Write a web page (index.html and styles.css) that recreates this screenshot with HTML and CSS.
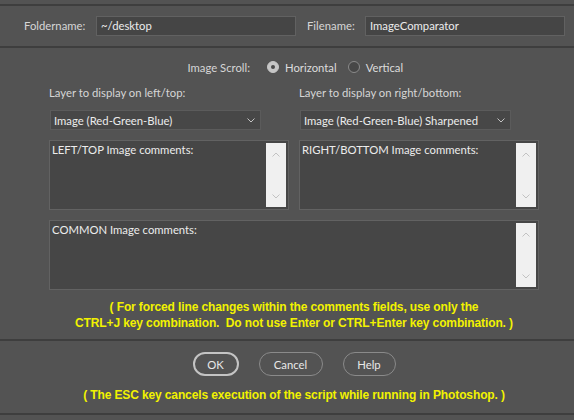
FILE: index.html
```html
<!DOCTYPE html>
<html>
<head>
<meta charset="utf-8">
<link rel="stylesheet" href="styles.css">
</head>
<body>
<div class="dialog">
  <div class="pad-top"></div>
  <div class="sep"></div>
  <div class="header">
    <span class="hlabel first">Foldername:</span>
    <div class="input">~/desktop</div>
    <span class="hlabel second">Filename:</span>
    <div class="input">ImageComparator</div>
  </div>
  <div class="sep"></div>
  <div class="main">
    <div class="scroll-row">
      <span class="scroll-label">Image Scroll:</span>
      <span class="radio checked"></span><span class="radio-text">Horizontal</span>
      <span class="radio"></span><span class="radio-text">Vertical</span>
    </div>
    <div class="cols">
      <div class="col">
        <div class="col-label">Layer to display on left/top:</div>
        <div class="select"><span>Image (Red-Green-Blue)</span><svg class="chev" width="8" height="5" viewBox="0 0 8 5"><path d="M0.5 0.5 L4 4 L7.5 0.5" fill="none" stroke="#c4c4c4" stroke-width="1"/></svg></div>
        <div class="memo"><div class="memo-text">LEFT/TOP Image comments:</div><div class="sbar"><svg width="8" height="5" viewBox="0 0 8 5"><path d="M0.5 4.5 L4 1 L7.5 4.5" fill="none" stroke="#c2c2c2" stroke-width="1"/></svg><svg width="8" height="5" viewBox="0 0 8 5"><path d="M0.5 0.5 L4 4 L7.5 0.5" fill="none" stroke="#c2c2c2" stroke-width="1"/></svg></div></div>
      </div>
      <div class="col">
        <div class="col-label">Layer to display on right/bottom:</div>
        <div class="select"><span>Image (Red-Green-Blue) Sharpened</span><svg class="chev" width="8" height="5" viewBox="0 0 8 5"><path d="M0.5 0.5 L4 4 L7.5 0.5" fill="none" stroke="#c4c4c4" stroke-width="1"/></svg></div>
        <div class="memo"><div class="memo-text">RIGHT/BOTTOM Image comments:</div><div class="sbar"><svg width="8" height="5" viewBox="0 0 8 5"><path d="M0.5 4.5 L4 1 L7.5 4.5" fill="none" stroke="#c2c2c2" stroke-width="1"/></svg><svg width="8" height="5" viewBox="0 0 8 5"><path d="M0.5 0.5 L4 4 L7.5 0.5" fill="none" stroke="#c2c2c2" stroke-width="1"/></svg></div></div>
      </div>
    </div>
    <div class="memo common"><div class="memo-text">COMMON Image comments:</div><div class="sbar"><svg width="8" height="5" viewBox="0 0 8 5"><path d="M0.5 4.5 L4 1 L7.5 4.5" fill="none" stroke="#c2c2c2" stroke-width="1"/></svg><svg width="8" height="5" viewBox="0 0 8 5"><path d="M0.5 0.5 L4 4 L7.5 0.5" fill="none" stroke="#c2c2c2" stroke-width="1"/></svg></div></div>
    <div class="note">( For forced line changes within the comments fields, use only the<br>CTRL+J key combination.&nbsp; Do not use Enter or CTRL+Enter key combination. )</div>
  </div>
  <div class="sep"></div>
  <div class="bottom">
    <div class="buttons">
      <div class="btn focus ok">OK</div>
      <div class="btn cancel">Cancel</div>
      <div class="btn help">Help</div>
    </div>
    <div class="note esc">( The ESC key cancels execution of the script while running in Photoshop. )</div>
  </div>
  <div class="sep"></div>
  <div class="pad-top"></div>
</div>
</body>
</html>
```
FILE: styles.css
```css
html, body {
  margin: 0;
  padding: 0;
  background: #535353;
  overflow: hidden;
}
.dialog {
  width: 588px;
  font-family: Lato, "Noto Sans", sans-serif;
  font-size: 11.3px;
  color: #d6d6d6;
}
.pad-top { height: 4px; }
.sep { height: 2px; background: #3e3e3e; }
.header {
  height: 40px;
  display: flex;
  align-items: center;
  padding-left: 24px;
  box-sizing: border-box;
}
.hlabel { line-height: 16px; }
.hlabel.first { width: 72px; }
.hlabel.second { width: 58px; margin-left: 11px; }
.input {
  width: 200px;
  height: 20px;
  box-sizing: border-box;
  background: #454545;
  border: 1px solid #616161;
  color: #ececec;
  line-height: 18px;
  padding-left: 4px;
}
.main {
  padding: 9px 0 8px 49px;
}
.scroll-row {
  height: 20px;
  display: flex;
  align-items: center;
  margin-left: -49px;
}
.scroll-label { width: 250px; text-align: right; }
.radio {
  width: 12px;
  height: 12px;
  box-sizing: border-box;
  border-radius: 50%;
  border: 1px solid #8a8a8a;
  background: #474747;
  margin-left: 17px;
  display: inline-flex;
  align-items: center;
  justify-content: center;
}
.radio.checked { background: #c6c6c6; border-color: #c6c6c6; }
.radio.checked::after {
  content: "";
  width: 4px;
  height: 4px;
  border-radius: 50%;
  background: #4a4a4a;
}
.radio + .radio-text { margin-left: 6px; }
.radio-text + .radio { margin-left: 11px; }
.radio-text { color: #dcdcdc; }
.cols {
  display: grid;
  grid-template-columns: 240px 240px;
  column-gap: 10px;
  margin-top: 8px;
}
.col-label { line-height: 16px; height: 16px; }
.select {
  margin-top: 9px;
  margin-left: 1px;
  width: 211px;
  height: 20px;
  box-sizing: border-box;
  background: #474747;
  border: 1px solid #5b5b5b;
  color: #ececec;
  display: flex;
  align-items: center;
  justify-content: space-between;
  padding: 0 5px 0 3px;
  white-space: nowrap;
}
.chev { display: block; }
.memo {
  margin-top: 10px;
  width: 240px;
  height: 70px;
  box-sizing: border-box;
  background: #464646;
  border: 1px solid #626262;
  display: flex;
}
.memo.common { width: 490px; }
.memo-text {
  flex: 1;
  color: #ececec;
  padding: 1px 0 0 2px;
  line-height: 16px;
}
.sbar {
  width: 20px;
  margin: 2px 2px 2px 0;
  background: #f0f0f0;
  display: flex;
  flex-direction: column;
  align-items: center;
  justify-content: space-between;
  padding: 9px 0 8px;
  box-sizing: border-box;
}
.sbar svg { display: block; }
.note {
  margin-left: -49px;
  margin-top: 9px;
  text-align: center;
  font-family: "Liberation Sans", Arial, sans-serif;
  font-weight: bold;
  font-size: 12px;
  letter-spacing: -0.12px;
  line-height: 16px;
  color: #f2f200;
}
.bottom { padding: 11px 0 10px; }
.buttons {
  display: flex;
  justify-content: center;
  gap: 20px;
  height: 24px;
}
.btn {
  height: 24px;
  box-sizing: border-box;
  border: 1px solid #8a8a8a;
  border-radius: 12px;
  display: flex;
  align-items: center;
  justify-content: center;
  color: #e8e8e8;
}
.btn.focus { border: 2px solid #c4c4c4; }
.btn.ok { width: 46px; }
.btn.cancel { width: 64px; }
.btn.help { width: 53px; }
.note.esc { margin: 11px 0 0; }
```
